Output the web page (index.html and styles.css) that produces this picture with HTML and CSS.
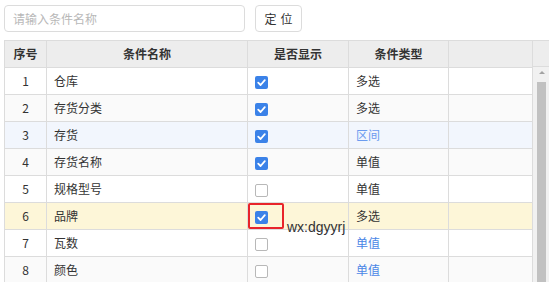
FILE: index.html
```html
<!DOCTYPE html>
<html>
<head>
  <meta charset="utf-8">
  <title>条件设置</title>
  <link rel="stylesheet" href="styles.css">
</head>
<body>

  <div class="toolbar">
    <input class="search" type="text" placeholder="请输入条件名称">
    <button class="locate">定位</button>
  </div>

  <div class="grid">
    <table class="grid-table">
      <colgroup>
        <col class="c-no"><col class="c-name"><col class="c-show"><col class="c-type"><col class="c-rest">
      </colgroup>
      <thead>
        <tr><th>序号</th><th>条件名称</th><th>是否显示</th><th>条件类型</th><th></th></tr>
      </thead>
      <tbody id="rows"></tbody>
    </table>
    <div class="scrollbar">
      <div class="scroll-corner"></div>
      <div class="scroll-track">
        <div class="scroll-up"></div>
        <div class="scroll-thumb"></div>
      </div>
    </div>
  </div>

  <div class="mark">wx:dgyyrj</div>

  <script>
    const conditions = [
      { name: '仓库', show: true, type: '多选' },
      { name: '存货分类', show: true, type: '多选' },
      { name: '存货', show: true, type: '区间', link: true, cls: 'hover' },
      { name: '存货名称', show: true, type: '单值' },
      { name: '规格型号', show: false, type: '单值' },
      { name: '品牌', show: true, type: '多选', cls: 'current' },
      { name: '瓦数', show: false, type: '单值', link: true },
      { name: '颜色', show: false, type: '单值', link: true }
    ];

    const tick = '<svg viewBox="0 0 13 13" width="13" height="13"><path d="M3.2 6.6 L5.6 9 L9.8 4.2" fill="none" stroke="#fff" stroke-width="1.8" stroke-linecap="round" stroke-linejoin="round"/></svg>';

    const tbody = document.getElementById('rows');
    conditions.forEach((c, i) => {
      const tr = document.createElement('tr');
      if (i % 2 === 1) tr.classList.add('even');
      if (c.cls) tr.classList.add(c.cls);
      const box = c.show ? `<span class="check on">${tick}</span>` : '<span class="check"></span>';
      const outline = c.cls === 'current' ? ' boxed' : '';
      tr.innerHTML =
        `<td class="no">${i + 1}</td>` +
        `<td>${c.name}</td>` +
        `<td class="show${outline}">${box}</td>` +
        `<td class="${c.link ? 'link' : ''}">${c.type}</td>` +
        '<td></td>';
      tbody.appendChild(tr);
    });
  </script>

</body>
</html>
```

FILE: styles.css
```css
body {
  margin: 0;
  padding: 5px 4px;
  font-family: "Noto Sans CJK SC", "Liberation Sans", sans-serif;
  font-size: 12px;
  color: #333;
  background: #fff;
  overflow: hidden;
}

.toolbar {
  display: flex;
  gap: 10px;
  height: 27px;
  margin-bottom: 8px;
}

.search {
  width: 241px;
  height: 27px;
  box-sizing: border-box;
  border: 1px solid #dcdcdc;
  border-radius: 4px;
  padding: 0 8px;
  font-family: inherit;
  font-size: 12px;
  outline: none;
}

.search::placeholder {
  color: #b8b8b8;
}

.locate {
  width: 47px;
  height: 27px;
  box-sizing: border-box;
  border: 1px solid #dcdcdc;
  border-radius: 4px;
  background: #fff;
  font-family: inherit;
  font-size: 12px;
  letter-spacing: 4px;
  text-indent: 4px;
  color: #333;
  padding: 0;
}

.grid {
  display: flex;
  width: 545px;
}

.grid-table {
  width: 528px;
  table-layout: fixed;
  border-collapse: collapse;
  font-size: 12px;
}

.c-no { width: 42px; }
.c-name { width: 201px; }
.c-show { width: 101px; }
.c-type { width: 100px; }
.c-rest { width: 84px; }

th, td {
  border: 1px solid #dcdcdc;
  height: 27px;
  padding: 0 7px;
  line-height: 16px;
  box-sizing: border-box;
  white-space: nowrap;
}

th {
  background: #ededed;
  font-weight: bold;
  text-align: center;
  color: #333;
}

tr.even td { background: #fafafa; }
tr.hover td { background: #f2f6fd; }
tr.current td { background: #fdf6d8; }

td.no { text-align: center; }

td.show {
  padding-left: 7px;
  position: relative;
}

td.link { color: #4a86e6; }
tr.hover td.link { color: #6b9bef; }

.check {
  display: inline-block;
  width: 13px;
  height: 13px;
  box-sizing: border-box;
  border: 1px solid #b8b8b8;
  border-radius: 2px;
  background: #fff;
  vertical-align: middle;
}

.check.on {
  border: none;
  background: #3b82e8;
}

.check svg { display: block; }

/* red outline drawn round the highlighted checkbox */
td.boxed::after {
  content: "";
  position: absolute;
  left: 0;
  top: 0;
  width: 36px;
  height: 26px;
  box-sizing: border-box;
  border: 2px solid #e8242b;
  border-radius: 2px;
}

.scrollbar {
  width: 17px;
  display: flex;
  flex-direction: column;
}

.scroll-corner {
  height: 27px;
  background: #ededed;
  border-top: 1px solid #dcdcdc;
  border-bottom: 1px solid #dcdcdc;
  box-sizing: border-box;
}

.scroll-track {
  flex: 1;
  background: #f1f1f1;
  padding: 4px 3px 0 4px;
}

.scroll-up {
  width: 0;
  height: 0;
  margin: 0 auto 8px;
  border-left: 3px solid transparent;
  border-right: 3px solid transparent;
  border-bottom: 3px solid #a3a3a3;
}

.scroll-thumb {
  height: 200px;
  background: #c1c1c1;
}

.mark {
  position: absolute;
  left: 287px;
  top: 219px;
  font-family: "Liberation Sans", sans-serif;
  font-size: 14px;
  color: #333;
}
```
